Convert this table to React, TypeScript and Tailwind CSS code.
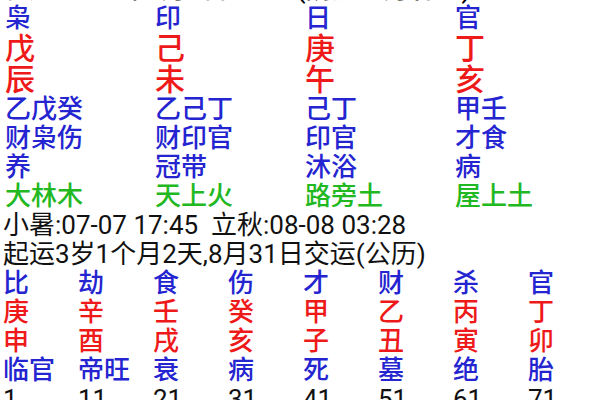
import React from 'react';

const font = { fontFamily: 'Roboto, "Noto Sans CJK SC", sans-serif' };

const pillars = [
  { god: '枭', stem: '戊', branch: '辰', hidden: '乙戊癸', gods: '财枭伤', stage: '养', nayin: '大林木' },
  { god: '印', stem: '己', branch: '未', hidden: '乙己丁', gods: '财印官', stage: '冠带', nayin: '天上火' },
  { god: '日', stem: '庚', branch: '午', hidden: '己丁', gods: '印官', stage: '沐浴', nayin: '路旁土' },
  { god: '官', stem: '丁', branch: '亥', hidden: '甲壬', gods: '才食', stage: '病', nayin: '屋上土' },
];

const luck = [
  { god: '比', stem: '庚', branch: '申', stage: '临官', age: '1' },
  { god: '劫', stem: '辛', branch: '酉', stage: '帝旺', age: '11' },
  { god: '食', stem: '壬', branch: '戌', stage: '衰', age: '21' },
  { god: '伤', stem: '癸', branch: '亥', stage: '病', age: '31' },
  { god: '才', stem: '甲', branch: '子', stage: '死', age: '41' },
  { god: '财', stem: '乙', branch: '丑', stage: '墓', age: '51' },
  { god: '杀', stem: '丙', branch: '寅', stage: '绝', age: '61' },
  { god: '官', stem: '丁', branch: '卯', stage: '胎', age: '71' },
];

const Row = ({ cells, color, size }: { cells: string[]; color: string; size: string }) => (
  <div className={`grid grid-cols-[repeat(4,150px)] pl-[5px] ${color} ${size}`}>
    {cells.map((c, i) => (
      <div key={i}>{c}</div>
    ))}
  </div>
);

const App = () => {
  return (
    <div className="w-[600px] h-[400px] overflow-hidden bg-white font-medium" style={font}>
      <div className="-mt-[25px]">
        {/* header line, mostly scrolled off */}
        <div className="h-[29px] text-[26px] leading-[29px] text-black pl-[3px] whitespace-nowrap">
          乾造 1988年8月5日 14时 (阴历六月廿三)
        </div>

        {/* four pillars */}
        <Row cells={pillars.map((p) => p.god)} color="text-[#2424d0]" size="text-[26px] leading-[29px]" />
        <Row cells={pillars.map((p) => p.stem)} color="text-[#ee1a1a]" size="text-[30px] leading-[31px]" />
        <Row cells={pillars.map((p) => p.branch)} color="text-[#ee1a1a]" size="text-[30px] leading-[31px]" />
        <Row cells={pillars.map((p) => p.hidden)} color="text-[#2424d0]" size="text-[26px] leading-[29px]" />
        <Row cells={pillars.map((p) => p.gods)} color="text-[#2424d0]" size="text-[26px] leading-[29px]" />
        <Row cells={pillars.map((p) => p.stage)} color="text-[#2424d0]" size="text-[26px] leading-[29px]" />
        <Row cells={pillars.map((p) => p.nayin)} color="text-[#22b822]" size="text-[26px] leading-[29px]" />

        {/* solar terms and luck start */}
        <div className="text-[26px] leading-[29px] text-[#111] pl-[3px] whitespace-nowrap font-normal">
          小暑:07-07 17:45&nbsp;&nbsp;立秋:08-08 03:28
        </div>
        <div className="text-[26px] leading-[29px] text-[#111] pl-[3px] whitespace-nowrap font-normal">
          起运3岁1个月2天,8月31日交运(公历)
        </div>

        {/* luck pillars */}
        <div className="grid grid-cols-[repeat(8,75px)] pl-[3px] text-[26px] leading-[29px]">
          {luck.map((l, i) => (
            <div key={i} className="flex flex-col">
              <span className="text-[#2424d0]">{l.god}</span>
              <span className="text-[#ee1a1a]">{l.stem}</span>
              <span className="text-[#ee1a1a]">{l.branch}</span>
              <span className="text-[#2424d0] whitespace-nowrap">{l.stage}</span>
              <span className="text-[#111] font-normal">{l.age}</span>
            </div>
          ))}
        </div>
      </div>
    </div>
  );
};

export default App;
